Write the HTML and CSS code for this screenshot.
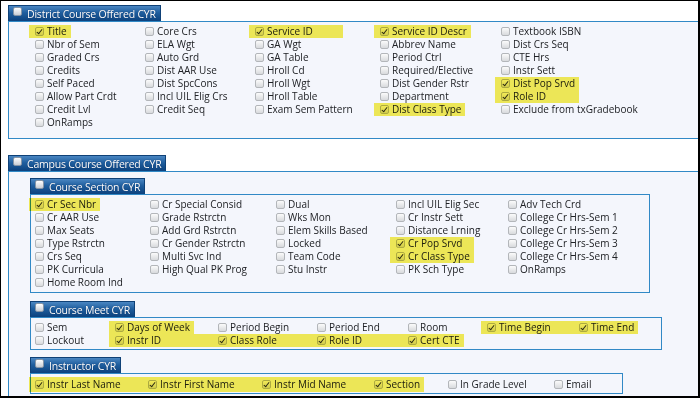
FILE: index.html
```html
<!DOCTYPE html>
<html lang="en">
<head>
<meta charset="utf-8">
<title>Course Offered CYR</title>
<link rel="stylesheet" href="styles.css">
</head>
<body>
<div class="frame">
  <section class="panel">
    <div class="tab"><span class="cb cb-tab"></span><span class="tab-label">District Course Offered CYR</span></div>
    <div class="panel-body district-body">
      <div class="grid grid-district">
        <span class="item hl"><span class="cb on"></span>Title</span>
        <span class="item"><span class="cb"></span>Core Crs</span>
        <span class="item hl w-sid"><span class="cb on"></span>Service ID</span>
        <span class="item hl"><span class="cb on"></span>Service ID Descr</span>
        <span class="item"><span class="cb"></span>Textbook ISBN</span>

        <span class="item"><span class="cb"></span>Nbr of Sem</span>
        <span class="item"><span class="cb"></span>ELA Wgt</span>
        <span class="item"><span class="cb"></span>GA Wgt</span>
        <span class="item"><span class="cb"></span>Abbrev Name</span>
        <span class="item"><span class="cb"></span>Dist Crs Seq</span>

        <span class="item"><span class="cb"></span>Graded Crs</span>
        <span class="item"><span class="cb"></span>Auto Grd</span>
        <span class="item"><span class="cb"></span>GA Table</span>
        <span class="item"><span class="cb"></span>Period Ctrl</span>
        <span class="item"><span class="cb"></span>CTE Hrs</span>

        <span class="item"><span class="cb"></span>Credits</span>
        <span class="item"><span class="cb"></span>Dist AAR Use</span>
        <span class="item"><span class="cb"></span>Hroll Cd</span>
        <span class="item"><span class="cb"></span>Required/Elective</span>
        <span class="item"><span class="cb"></span>Instr Sett</span>

        <span class="item"><span class="cb"></span>Self Paced</span>
        <span class="item"><span class="cb"></span>Dist SpcCons</span>
        <span class="item"><span class="cb"></span>Hroll Wgt</span>
        <span class="item"><span class="cb"></span>Dist Gender Rstr</span>
        <span class="item hl w-pair"><span class="cb on"></span>Dist Pop Srvd</span>

        <span class="item"><span class="cb"></span>Allow Part Crdt</span>
        <span class="item"><span class="cb"></span>Incl UIL Elig Crs</span>
        <span class="item"><span class="cb"></span>Hroll Table</span>
        <span class="item"><span class="cb"></span>Department</span>
        <span class="item hl w-pair"><span class="cb on"></span>Role ID</span>

        <span class="item"><span class="cb"></span>Credit Lvl</span>
        <span class="item"><span class="cb"></span>Credit Seq</span>
        <span class="item"><span class="cb"></span>Exam Sem Pattern</span>
        <span class="item hl"><span class="cb on"></span>Dist Class Type</span>
        <span class="item"><span class="cb"></span>Exclude from txGradebook</span>

        <span class="item"><span class="cb"></span>OnRamps</span>
      </div>
    </div>
  </section>

  <section class="panel campus">
    <div class="tab"><span class="cb cb-tab"></span><span class="tab-label">Campus Course Offered CYR</span></div>
    <div class="panel-body campus-body">

      <section class="sub">
        <div class="tab"><span class="cb cb-tab"></span><span class="tab-label">Course Section CYR</span></div>
        <div class="sub-body section-body">
          <div class="grid grid-section">
            <span class="item hl"><span class="cb on"></span>Cr Sec Nbr</span>
            <span class="item"><span class="cb"></span>Cr Special Consid</span>
            <span class="item"><span class="cb"></span>Dual</span>
            <span class="item"><span class="cb"></span>Incl UIL Elig Sec</span>
            <span class="item"><span class="cb"></span>Adv Tech Crd</span>

            <span class="item"><span class="cb"></span>Cr AAR Use</span>
            <span class="item"><span class="cb"></span>Grade Rstrctn</span>
            <span class="item"><span class="cb"></span>Wks Mon</span>
            <span class="item"><span class="cb"></span>Cr Instr Sett</span>
            <span class="item"><span class="cb"></span>College Cr Hrs-Sem 1</span>

            <span class="item"><span class="cb"></span>Max Seats</span>
            <span class="item"><span class="cb"></span>Add Grd Rstrctn</span>
            <span class="item"><span class="cb"></span>Elem Skills Based</span>
            <span class="item"><span class="cb"></span>Distance Lrning</span>
            <span class="item"><span class="cb"></span>College Cr Hrs-Sem 2</span>

            <span class="item"><span class="cb"></span>Type Rstrctn</span>
            <span class="item"><span class="cb"></span>Cr Gender Rstrctn</span>
            <span class="item"><span class="cb"></span>Locked</span>
            <span class="item hl w-pair"><span class="cb on"></span>Cr Pop Srvd</span>
            <span class="item"><span class="cb"></span>College Cr Hrs-Sem 3</span>

            <span class="item"><span class="cb"></span>Crs Seq</span>
            <span class="item"><span class="cb"></span>Multi Svc Ind</span>
            <span class="item"><span class="cb"></span>Team Code</span>
            <span class="item hl w-pair"><span class="cb on"></span>Cr Class Type</span>
            <span class="item"><span class="cb"></span>College Cr Hrs-Sem 4</span>

            <span class="item"><span class="cb"></span>PK Curricula</span>
            <span class="item"><span class="cb"></span>High Qual PK Prog</span>
            <span class="item"><span class="cb"></span>Stu Instr</span>
            <span class="item"><span class="cb"></span>PK Sch Type</span>
            <span class="item"><span class="cb"></span>OnRamps</span>

            <span class="item"><span class="cb"></span>Home Room Ind</span>
          </div>
        </div>
      </section>

      <section class="sub sub-meet">
        <div class="tab"><span class="cb cb-tab"></span><span class="tab-label">Course Meet CYR</span></div>
        <div class="sub-body meet-body">
          <div class="grid grid-meet">
            <span class="item"><span class="cb"></span>Sem</span>
            <span class="item hl"><span class="cb on"></span>Days of Week</span>
            <span class="item"><span class="cb"></span>Period Begin</span>
            <span class="item"><span class="cb"></span>Period End</span>
            <span class="item"><span class="cb"></span>Room</span>
            <span class="item hl fill"><span class="cb on"></span>Time Begin</span>
            <span class="item hl"><span class="cb on"></span>Time End</span>

            <span class="item"><span class="cb"></span>Lockout</span>
            <span class="item hl fill"><span class="cb on"></span>Instr ID</span>
            <span class="item hl fill"><span class="cb on"></span>Class Role</span>
            <span class="item hl fill"><span class="cb on"></span>Role ID</span>
            <span class="item hl"><span class="cb on"></span>Cert CTE</span>
          </div>
        </div>
      </section>

      <section class="sub sub-instr">
        <div class="tab"><span class="cb cb-tab"></span><span class="tab-label">Instructor CYR</span></div>
        <div class="sub-body instr-body">
          <div class="grid grid-instr">
            <span class="item hl fill"><span class="cb on"></span>Instr Last Name</span>
            <span class="item hl fill"><span class="cb on"></span>Instr First Name</span>
            <span class="item hl fill"><span class="cb on"></span>Instr Mid Name</span>
            <span class="item hl"><span class="cb on"></span>Section</span>
            <span class="item"><span class="cb"></span>In Grade Level</span>
            <span class="item"><span class="cb"></span>Email</span>
          </div>
        </div>
      </section>

    </div>
  </section>
</div>
</body>
</html>
```

FILE: styles.css
```css
html, body {
  margin: 0;
  padding: 0;
  background: #ffffff;
}

body {
  font-family: "Open Sans", "Noto Sans", "Liberation Sans", sans-serif;
  font-size: 10px;
  color: #202226;
}

.frame {
  width: 700px;
  height: 398px;
  box-sizing: border-box;
  border: 1px solid #000;
  border-right-width: 2px;
  border-bottom-width: 2px;
  background: #ffffff;
  overflow: hidden;
}

.panel {
  display: flex;
  flex-direction: column;
  align-items: flex-start;
  margin: 4px 0 0 7px;
  width: 730px;
}

.panel.campus {
  margin-top: 16px;
}

.tab {
  display: flex;
  align-items: center;
  box-sizing: border-box;
  height: 16px;
  padding: 0 4px;
  background: linear-gradient(#4a86c2 0%, #1f5e9e 45%, #0c427e 100%);
  border: 1px solid #0f4177;
  border-bottom: 0;
  color: #ffffff;
  text-shadow: 0 0 1px rgba(0, 20, 60, 0.6);
  white-space: nowrap;
}

.tab-label {
  font-size: 10.5px;
  letter-spacing: -0.2px;
  line-height: 15px;
  padding-top: 1px;
}

.panel-body,
.sub-body {
  align-self: stretch;
  border: 1px solid #3189c6;
  background: #f4f6fc;
}

.sub-body {
  align-self: flex-start;
}

.district-body {
  padding: 3px 0 9px 22px;
}

.campus-body {
  padding: 6px 0 40px 21px;
}

.sub {
  display: flex;
  flex-direction: column;
  align-items: flex-start;
}

.sub-meet {
  margin-top: 8px;
}

.sub-instr {
  margin-top: 7px;
}

.section-body {
  padding: 3px 0 3px 0;
}

.meet-body {
  padding: 3px 0 2px 0;
}

.instr-body {
  padding: 3px 0 1px 0;
}

.grid {
  display: grid;
  grid-auto-rows: 13px;
}

.grid-district {
  grid-template-columns: 110px 110px 125px 121px 200px;
}

.grid-section {
  grid-template-columns: 115px 126px 120px 112px 145px;
}

.grid-meet {
  grid-template-columns: 80px 103px 99px 91px 79px 92px 86px;
}

.grid-instr {
  grid-template-columns: 113px 114px 112px 74px 106px 72px;
  grid-auto-rows: 15px;
}

.item {
  position: relative;
  display: flex;
  align-items: center;
  justify-self: start;
  box-sizing: border-box;
  padding: 0 4px;
  line-height: 13px;
  white-space: nowrap;
}

.item.fill {
  justify-self: stretch;
}

.item.w-sid {
  width: 92px;
}

.item.w-pair {
  width: 82px;
}

.item.hl::after {
  content: "";
  position: absolute;
  left: -2px;
  right: 0;
  top: 0;
  bottom: 0;
  background: #f7ef58;
  mix-blend-mode: multiply;
  pointer-events: none;
}

.item.fill + .item.hl::after {
  left: 0;
}

.cb {
  position: relative;
  flex: none;
  box-sizing: border-box;
  width: 9px;
  height: 9px;
  margin: 0 3px 1px 0;
  border: 1px solid #b3b6ba;
  border-radius: 2px;
  background: linear-gradient(#fbfbfb, #d8dadd);
}

.cb.on::after {
  content: "";
  position: absolute;
  left: 2px;
  top: 0;
  width: 2px;
  height: 5px;
  border: solid #2a2a2a;
  border-width: 0 1.5px 1.5px 0;
  transform: rotate(38deg);
}

.cb-tab {
  align-self: flex-start;
  width: 9px;
  height: 9px;
  margin: 1px 5px 0 0;
  border: 1px solid #8695a6;
  background: linear-gradient(#ffffff, #c9ced5);
}
```
